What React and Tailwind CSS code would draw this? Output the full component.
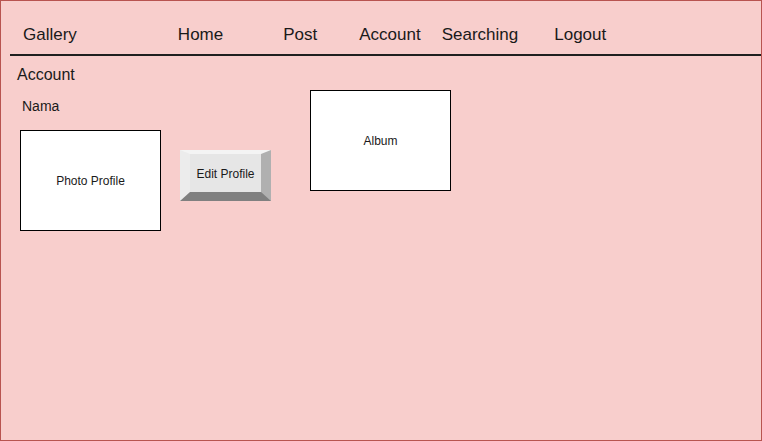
export default function App() {
  return (
    <div className="w-[762px] h-[441px] bg-[#f8cecc] border border-[#b85450] font-['Liberation_Sans',Arial,sans-serif] text-[#1a1a1a] overflow-hidden">
      {/* Nav */}
      <div className="flex items-center h-[53px] pt-[14px] pl-[22px] text-[17px]">
        <span>Gallery</span>
        <span className="ml-[101px]">Home</span>
        <span className="ml-[60px]">Post</span>
        <span className="ml-[42px]">Account</span>
        <span className="ml-[21px]">Searching</span>
        <span className="ml-[36px]">Logout</span>
      </div>
      <div className="ml-[9px] h-[2px] bg-[#1f1f1f]" />

      <div className="flex">
        <div className="pl-[16px]">
          <p className="mt-[10px] text-[16px] leading-[18px]">Account</p>
          <p className="mt-[14px] ml-[5px] text-[14px] leading-[16px]">Nama</p>
          <div className="flex items-start mt-[16px] ml-[3px]">
            <div className="w-[141px] h-[101px] bg-white border border-black flex items-center justify-center text-[12px]">
              Photo Profile
            </div>
            <div className="mt-[20px] ml-[19px] w-[91px] h-[51px] pt-[2px] border-t-[4px] border-b-[9px] border-x-[10px] border-t-[#f4f4f4] border-l-[#ececec] border-r-[#b0b0b0] border-b-[#808080] bg-[#e6e6e6] flex items-center justify-center text-[12px]">
              Edit Profile
            </div>
          </div>
        </div>
        <div className="ml-[39px] mt-[34px] w-[141px] h-[101px] bg-white border border-black flex items-center justify-center text-[12px]">
          Album
        </div>
      </div>
    </div>
  );
}
